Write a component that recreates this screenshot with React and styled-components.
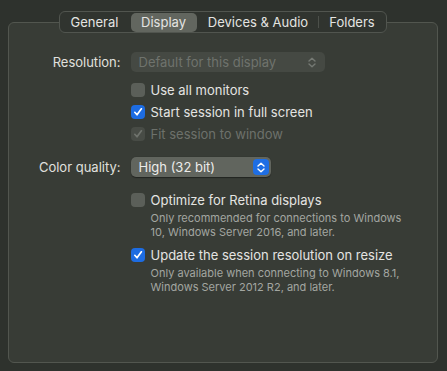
import React from 'react';
import styled, { createGlobalStyle } from 'styled-components';

const GlobalStyle = createGlobalStyle`
  html, body {
    margin: 0;
    padding: 0;
    background: #2e322d;
    font-family: Inter, "Noto Sans", sans-serif;
    -webkit-font-smoothing: antialiased;
  }
`;

const Screen = styled.div`
  width: 447px;
  height: 371px;
  box-sizing: border-box;
  padding: 11px 10px 0 8px;
  display: flex;
  flex-direction: column;
  align-items: center;
`;

const TabBar = styled.div`
  position: relative;
  z-index: 1;
  display: flex;
  align-items: center;
  height: 22px;
  width: 328px;
  box-sizing: border-box;
  margin-bottom: -11px;
  padding: 0 1px;
  border: 1px solid #51554f;
  border-radius: 6px;
  background: #30342f;
`;

const Tab = styled.div`
  display: flex;
  flex: none;
  align-items: center;
  justify-content: center;
  width: ${({ width }) => width}px;
  height: 19px;
  border-radius: 5px;
  font-size: 13px;
  white-space: nowrap;
  color: #e4e4e2;
  background: ${({ active }) => (active ? '#62665f' : 'transparent')};
`;

const TabDivider = styled.span`
  display: flex;
  flex: none;
  justify-content: center;
  width: 2px;

  &::after {
    content: '';
    width: 1px;
    height: 12px;
    background: ${({ hidden }) => (hidden ? 'transparent' : '#4c504a')};
  }
`;

const Panel = styled.div`
  width: 430px;
  height: 341px;
  box-sizing: border-box;
  border: 1px solid #52564f;
  border-radius: 6px;
  background: #383c36;
  padding-top: 29px;
`;

const Row = styled.div`
  display: grid;
  grid-template-columns: 112px 1fr;
  column-gap: 10px;
  align-items: center;
  margin-top: ${({ top }) => top || 0}px;
`;

const Label = styled.div`
  text-align: right;
  font-size: 13px;
  color: #e0e0de;
`;

const Popup = styled.div`
  display: flex;
  align-items: center;
  justify-content: space-between;
  width: ${({ width }) => width}px;
  height: 20px;
  box-sizing: border-box;
  padding: 0 2px 0 8px;
  border-radius: 5px;
  font-size: 13px;
  background: ${({ disabled }) => (disabled ? '#454943' : '#61655e')};
  color: ${({ disabled }) => (disabled ? '#6f736d' : '#ececea')};
  box-shadow: ${({ disabled }) => (disabled ? 'none' : '0 0.5px 1px rgba(0,0,0,0.4)')};
`;

const Stepper = styled.span`
  display: flex;
  align-items: center;
  justify-content: center;
  width: 16px;
  height: 16px;
  border-radius: 4px;
  background: ${({ plain }) => (plain ? 'transparent' : '#1e6ee4')};
  margin-right: ${({ plain }) => (plain ? 3 : 0)}px;
`;

const CheckRow = styled.div`
  display: flex;
  align-items: center;
  gap: 6px;
  height: 22px;
  font-size: 13px;
  color: ${({ disabled }) => (disabled ? '#6d716b' : '#e4e4e2')};
`;

const Box = styled.span`
  display: flex;
  align-items: center;
  justify-content: center;
  width: 14px;
  height: 14px;
  border-radius: 4px;
  flex: none;
  background: ${({ checked, disabled }) =>
    disabled ? '#484c46' : checked ? '#1d6ce2' : '#5b5f59'};
`;

const Note = styled.div`
  margin-left: 20px;
  font-size: 11px;
  line-height: 14px;
  color: #a3a6a1;
`;

function Chevrons({ color }) {
  return (
    <svg width="8" height="11" viewBox="0 0 8 11">
      <path d="M1 4 L4 1.2 L7 4 M1 7 L4 9.8 L7 7" fill="none" stroke={color}
        strokeWidth="1.4" strokeLinecap="round" strokeLinejoin="round" />
    </svg>
  );
}

function Check({ color }) {
  return (
    <svg width="10" height="10" viewBox="0 0 10 10">
      <path d="M1.8 5.3 L4 7.8 L8.4 1.8" fill="none" stroke={color}
        strokeWidth="1.7" strokeLinecap="round" strokeLinejoin="round" />
    </svg>
  );
}

function Checkbox({ checked, disabled, children }) {
  return (
    <CheckRow disabled={disabled}>
      <Box checked={checked} disabled={disabled}>
        {checked && <Check color={disabled ? '#6f736d' : '#ffffff'} />}
      </Box>
      {children}
    </CheckRow>
  );
}

const tabs = [
  { name: 'General', width: 68 },
  { name: 'Display', width: 66, active: true },
  { name: 'Devices & Audio', width: 119 },
  { name: 'Folders', width: 65 },
];

export default function App() {
  return (
    <>
      <GlobalStyle />
      <Screen>
        <TabBar>
          {tabs.map((t, i) => (
            <React.Fragment key={t.name}>
              {i > 0 && <TabDivider hidden={t.active || tabs[i - 1].active} />}
              <Tab active={t.active} width={t.width}>{t.name}</Tab>
            </React.Fragment>
          ))}
        </TabBar>
        <Panel>
          <Row>
            <Label>Resolution:</Label>
            <Popup width={194} disabled>
              Default for this display
              <Stepper plain><Chevrons color="#757973" /></Stepper>
            </Popup>
          </Row>
          <Row top={7}>
            <span />
            <Checkbox>Use all monitors</Checkbox>
          </Row>
          <Row>
            <span />
            <Checkbox checked>Start session in full screen</Checkbox>
          </Row>
          <Row>
            <span />
            <Checkbox checked disabled>Fit session to window</Checkbox>
          </Row>
          <Row top={12}>
            <Label>Color quality:</Label>
            <Popup width={140}>
              High (32 bit)
              <Stepper><Chevrons color="#ffffff" /></Stepper>
            </Popup>
          </Row>
          <Row top={12}>
            <span />
            <div>
              <Checkbox>Optimize for Retina displays</Checkbox>
              <Note>
                Only recommended for connections to Windows<br />
                10, Windows Server 2016, and later.
              </Note>
            </div>
          </Row>
          <Row top={5}>
            <span />
            <div>
              <Checkbox checked>Update the session resolution on resize</Checkbox>
              <Note>
                Only available when connecting to Windows 8.1,<br />
                Windows Server 2012 R2, and later.
              </Note>
            </div>
          </Row>
        </Panel>
      </Screen>
    </>
  );
}
